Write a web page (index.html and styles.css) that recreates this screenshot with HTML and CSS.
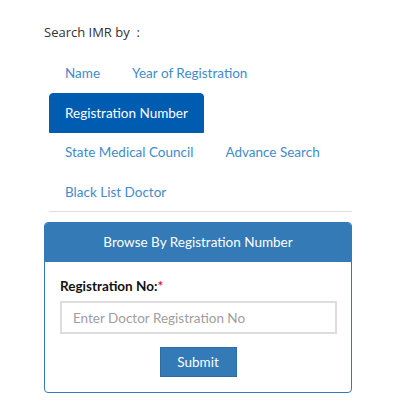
FILE: index.html
```html
<!DOCTYPE html>
<html>
<head>
<meta charset="utf-8">
<link rel="stylesheet" href="styles.css">
</head>
<body>
<div class="page">
  <div class="search-by">Search IMR by &nbsp;:</div>
  <ul class="tabs">
    <li class="tab"><a>Name</a></li>
    <li class="tab"><a>Year of Registration</a></li>
    <li class="tab active"><a>Registration Number</a></li>
    <li class="tab"><a>State Medical Council</a></li>
    <li class="tab"><a>Advance Search</a></li>
    <li class="tab"><a>Black List Doctor</a></li>
  </ul>
  <div class="panel">
    <div class="panel-heading">Browse By Registration Number</div>
    <div class="panel-body">
      <label class="label">Registration No:<span class="req">*</span></label>
      <input class="input" type="text" placeholder="Enter Doctor Registration No">
      <div class="actions"><button class="btn">Submit</button></div>
    </div>
  </div>
</div>
</body>
</html>
```
FILE: styles.css
```css
* { box-sizing: border-box; }
html, body { margin: 0; padding: 0; background: #fff; }
body { font-family: Lato, "Liberation Sans", sans-serif; font-size: 13.5px; color: #333; }
.page { padding: 23px 0 0 44px; width: 352px; }
.search-by { font-family: "Open Sans", "Noto Sans", sans-serif; font-size: 13px; color: #333; line-height: 18px; }
.tabs {
  list-style: none; margin: 12px 0 10px 5px; padding: 0;
  display: flex; flex-wrap: wrap; border-bottom: 1px solid #ddd;
}
.tab { margin: 0 0 -1px 0; }
.tab a {
  display: block; padding: 10px 15px; line-height: 18.5px; color: #428bca;
  border: 1px solid transparent; border-radius: 4px 4px 0 0; white-space: nowrap;
}
.tab.active a { background: #005cb1; color: #fff; border-color: #005cb1; }
.panel { border: 1px solid #337ab7; border-radius: 4px; overflow: hidden; }
.panel-heading {
  background: #337ab7; color: #fff; text-align: center; height: 39px; line-height: 39px; font-size: 13.5px;
}
.panel-body { padding: 14px 15px 15px 15px; }
.label { display: block; font-weight: bold; color: #111; font-size: 13.5px; line-height: 20px; margin-bottom: 5px; }
.req { color: #e31b1b; }
.input {
  display: block; width: 277px; height: 33px; border: 2px solid #ddd; padding: 0 11px;
  font-family: Lato, "Liberation Sans", sans-serif; font-size: 13.5px; color: #333; outline: none;
}
.input::placeholder { color: #9e9e9e; }
.actions { text-align: center; margin-top: 13px; }
.btn {
  background: #337ab7; color: #fff; border: 1px solid #2e6da4; font-family: Lato, "Liberation Sans", sans-serif;
  font-size: 13.5px; width: 77px; height: 30px; cursor: pointer;
}
```
